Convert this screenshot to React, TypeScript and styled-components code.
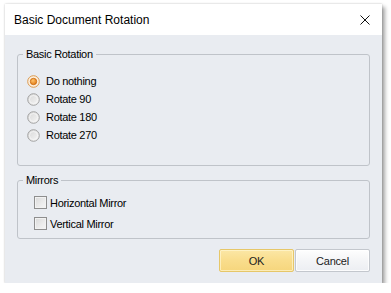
import styled, { createGlobalStyle } from "styled-components";

const GlobalStyle = createGlobalStyle`
  html, body {
    margin: 0;
    padding: 0;
    background: #ffffff;
  }
  body {
    font-family: "Liberation Sans", Arial, sans-serif;
    color: #000000;
  }
`;

const Window = styled.div`
  margin: 4px 0 0 5px;
  width: 377px;
  height: 279px;
  display: flex;
  flex-direction: column;
  background: #ffffff;
  box-shadow: 0 0 2px rgba(0, 0, 0, 0.22), 3px 3px 4px rgba(0, 0, 0, 0.35);
`;

const TitleBar = styled.div`
  height: 31px;
  flex: none;
  display: flex;
  align-items: center;
  justify-content: space-between;
  padding: 0 12px 0 9px;
  background: #ffffff;
`;

const Title = styled.span`
  font-size: 12px;
  color: #000000;
`;

const CloseButton = styled.button`
  width: 10px;
  height: 10px;
  padding: 0;
  border: none;
  background: transparent;
  display: flex;
`;

const Body = styled.div`
  flex: 1;
  display: flex;
  flex-direction: column;
  padding: 12px 12px 11px 12px;
  background: #e9ecf1;
  font-size: 11px;
  letter-spacing: -0.3px;
`;

const Group = styled.fieldset<{ $gapTop?: number }>`
  margin: ${(p) => p.$gapTop || 0}px 0 0 0;
  padding: 0;
  min-width: 0;
  border: 1px solid #bfc3c9;
  border-radius: 3px;
`;

const Legend = styled.legend`
  margin-left: 5px;
  padding: 0 3px;
  height: 14px;
  line-height: 14px;
  font-size: 11px;
`;

const GroupContent = styled.div<{ $top: number; $bottom: number }>`
  display: flex;
  flex-direction: column;
  padding: ${(p) => p.$top}px 0 ${(p) => p.$bottom}px 0;
`;

const RadioRow = styled.label`
  height: 18px;
  display: flex;
  align-items: center;
  gap: 6px;
  padding-left: 9px;
  line-height: 14px;
`;

const CheckRow = styled.label`
  height: 21px;
  display: flex;
  align-items: center;
  gap: 3px;
  padding-left: 16px;
  line-height: 14px;
`;

const Box = styled.span`
  width: 13px;
  height: 13px;
  box-sizing: border-box;
  flex: none;
  border: 1px solid #8e8e8e;
  box-shadow: inset 0 0 0 1px #f2f2f2;
  background: linear-gradient(135deg, #d9d9d9 0%, #ececec 60%, #f6f6f6 100%);
`;

const ButtonRow = styled.div`
  margin-top: 10px;
  display: flex;
  justify-content: flex-end;
  gap: 1px;
`;

const Button = styled.button<{ $primary?: boolean }>`
  width: 75px;
  height: 23px;
  padding: 0;
  box-sizing: border-box;
  font-family: "Liberation Sans", Arial, sans-serif;
  font-size: 11px;
  letter-spacing: -0.2px;
  color: #1b1b1b;
  border-radius: 2px;
  border: 1px solid ${(p) => (p.$primary ? "#e6c769" : "#c3c7cd")};
  background: ${(p) =>
    p.$primary
      ? "linear-gradient(180deg, #fbe7a6 0%, #f9dd8c 50%, #f6d67d 100%)"
      : "linear-gradient(180deg, #fefefe 0%, #f4f5f7 50%, #eceef2 100%)"};
  box-shadow: inset 0 0 0 1px
    ${(p) => (p.$primary ? "rgba(255, 246, 210, 0.7)" : "rgba(255, 255, 255, 0.8)")};
`;

function Radio({ checked }: { checked?: boolean }) {
  return (
    <svg width="13" height="13" viewBox="0 0 13 13" style={{ flex: "none" }}>
      <defs>
        <linearGradient id="radioOff" x1="0" y1="0" x2="1" y2="1">
          <stop offset="0" stopColor="#d6d6d6" />
          <stop offset="1" stopColor="#f7f7f7" />
        </linearGradient>
        <radialGradient id="radioDot" cx="0.4" cy="0.35" r="0.7">
          <stop offset="0" stopColor="#ffc36b" />
          <stop offset="1" stopColor="#e07812" />
        </radialGradient>
      </defs>
      <circle
        cx="6.5"
        cy="6.5"
        r="5.8"
        fill={checked ? "#fdeedb" : "url(#radioOff)"}
        stroke={checked ? "#d99a52" : "#a3a3a3"}
        strokeWidth="1"
      />
      {checked ? (
        <circle cx="6.5" cy="6.5" r="3.2" fill="url(#radioDot)" stroke="#c8680e" strokeWidth="0.8" />
      ) : (
        <circle cx="6.5" cy="6.5" r="4" fill="none" stroke="#f6f6f6" strokeWidth="0.8" />
      )}
    </svg>
  );
}

const rotations = ["Do nothing", "Rotate 90", "Rotate 180", "Rotate 270"];
const mirrors = ["Horizontal Mirror", "Vertical Mirror"];

export default function App() {
  return (
    <>
      <GlobalStyle />
      <Window>
        <TitleBar>
          <Title>Basic Document Rotation</Title>
          <CloseButton aria-label="Close">
            <svg width="10" height="10" viewBox="0 0 10 10">
              <path d="M0.5 0.5 L9.5 9.5 M9.5 0.5 L0.5 9.5" stroke="#111" strokeWidth="1" fill="none" />
            </svg>
          </CloseButton>
        </TitleBar>
        <Body>
          <Group>
            <Legend>Basic Rotation</Legend>
            <GroupContent $top={11} $bottom={21}>
              {rotations.map((r, i) => (
                <RadioRow key={r}>
                  <Radio checked={i === 0} />
                  <span>{r}</span>
                </RadioRow>
              ))}
            </GroupContent>
          </Group>
          <Group $gapTop={7}>
            <Legend>Mirrors</Legend>
            <GroupContent $top={5} $bottom={4}>
              {mirrors.map((m) => (
                <CheckRow key={m}>
                  <Box />
                  <span>{m}</span>
                </CheckRow>
              ))}
            </GroupContent>
          </Group>
          <ButtonRow>
            <Button $primary>OK</Button>
            <Button>Cancel</Button>
          </ButtonRow>
        </Body>
      </Window>
    </>
  );
}
